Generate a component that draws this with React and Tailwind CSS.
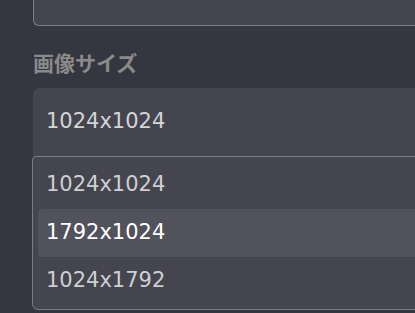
export default function App() {
  const opts = ["1024x1024", "1792x1024", "1024x1792"];
  const num = { fontFamily: '"DejaVu Sans", sans-serif' };
  return (
    <div className="w-[415px] h-[313px] overflow-hidden bg-[#343640] pl-[33px]">
      <div className="w-[440px] flex flex-col">
        <div className="h-[26px] bg-[#44454f] border-l border-b border-[#7b7c84] rounded-bl-[6px]" />
        <div
          className="mt-[22px] h-[28px] leading-[28px] text-[21px] font-bold text-[#8a8a8a]"
          style={{ fontFamily: '"Noto Sans CJK JP", sans-serif' }}
        >
          画像サイズ
        </div>
        <div
          className="mt-[12px] h-[68px] bg-[#44454f] rounded-t-[6px] flex items-center pl-[13px] text-[21px] text-[#d4d4d6]"
          style={num}
        >
          1024x1024
        </div>
        <div className="-ml-px h-[154px] border border-[#7b7c84] rounded-[4px] rounded-b-[6px] bg-[#44454f] py-1 pl-[5px]">
          {opts.map((o, i) => (
            <div
              key={o}
              className={
                i === 1
                  ? "h-[48px] flex items-center pl-2 rounded-[3px] bg-[#51525c] text-white text-[21px]"
                  : "h-[48px] flex items-center pl-2 text-[#cfcfd2] text-[21px]"
              }
              style={num}
            >
              {o}
            </div>
          ))}
        </div>
      </div>
    </div>
  );
}
